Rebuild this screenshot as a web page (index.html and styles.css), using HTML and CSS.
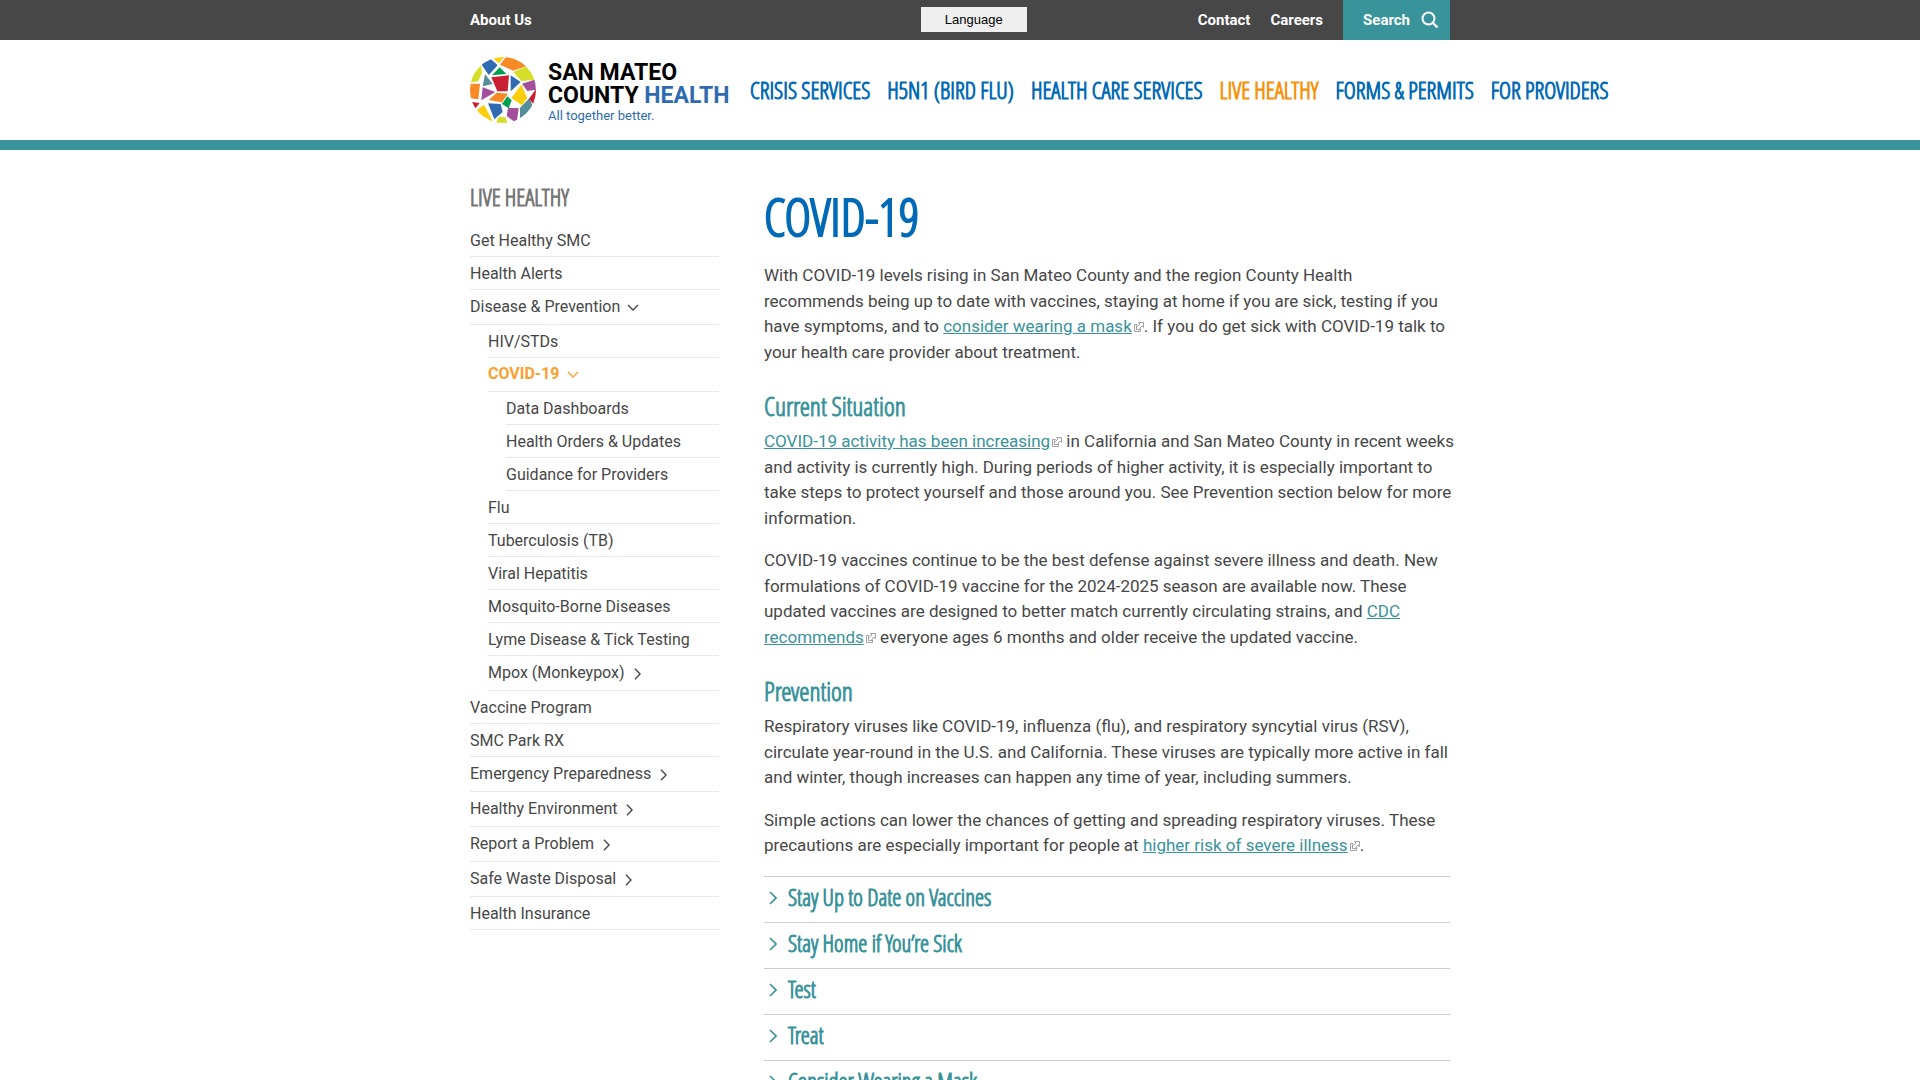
FILE: index.html
```html
<!DOCTYPE html>
<html lang="en">
<head>
<meta charset="utf-8">
<meta name="viewport" content="width=device-width, initial-scale=1">
<title>COVID-19 - San Mateo County Health</title>
<link rel="stylesheet" href="styles.css">
</head>
<body>
<svg class="sprite" aria-hidden="true">
  <symbol id="right" viewBox="0 0 8 14"><path d="M1 1l6 6-6 6" fill="none" stroke="currentColor" stroke-width="1.6"/></symbol>
  <symbol id="down" viewBox="0 0 12 8"><path d="M1 1l5 5 5-5" fill="none" stroke="currentColor" stroke-width="1.4"/></symbol>
  <symbol id="ext" viewBox="0 0 10 10"><path d="M3.500 2.500h-3v7h6v-3M4.500.500h5v5L8 4 5.500 6.500 6.500 7.500H2.500v-4l1 1L6 2z" fill="none" stroke="#999" stroke-width=".9"/></symbol>
</svg>

<div class="topbar">
  <div class="wrap topbar-row">
    <div><a class="top-link" href="#">About Us</a></div>
    <button class="language" type="button">Language</button>
    <nav class="top-right" aria-label="Utility">
      <a class="top-link" href="#">Contact</a>
      <a class="top-link" href="#">Careers</a>
      <button class="search" type="button">Search
        <svg width="18" height="18" viewBox="0 0 18 18" aria-hidden="true"><circle cx="7.500" cy="7.500" r="6" fill="none" stroke="#fff" stroke-width="2"/><path d="M12 12l4.500 4.500" stroke="#fff" stroke-width="2.400"/></svg>
      </button>
    </nav>
  </div>
</div>

<header class="header">
  <div class="wrap header-row">
    <a class="logo" href="#">
      <svg class="mosaic" viewBox="12 11 198 198" aria-hidden="true">
        <clipPath id="round"><circle cx="111" cy="110" r="99"/></clipPath>
        <g clip-path="url(#round)">
          <path fill="#fccf0d" d="M76 10h40L98 30zM166 94l18 40-16 22-32-22zM54 154l26 50-20 8-32-38z"/>
          <path fill="#2f6bb1" d="M46 33l26-18 23 21-27 29zM134 66l30 20-30 28zM66 150l38 2 6 24-25 22z"/>
          <path fill="#f78a24" d="M122 8h40l20 30-40 14-40-18zM6 91h36l-5 47-29-4zM92 118l34 3-18 26-40-7z"/>
          <path fill="#d5de29" d="M142 56l42-18 30 41-48 4zM8 88l14-30 23-24 3 26-12 24zM98 191h20l8 22H88z"/>
          <path fill="#558e98" d="M57 62l23 30-30 7zM162 164l29-31 12 34-41 34z"/>
          <path fill="#009f50" d="M78 66l23-24 20 20zM124 129l13 12-9 24-20-13z"/>
          <path fill="#c82032" d="M76 72l53-6-4 48H94zM212 104v60l-23-28zM10 145l31 4-17 21z"/>
          <path fill="#a44f9b" d="M168 91l44-14v32l-28 4zM50 102l38 14-42 25zM126 164l32 0-6 46-30-22z"/>
        </g>
      </svg>
      <span class="logo-words">
        <span class="logo-name">SAN MATEO<br>COUNTY <span class="logo-health">HEALTH</span></span>
        <span class="logo-tag">All together better.</span>
      </span>
    </a>
    <nav class="main-nav" aria-label="Main">
      <a href="#">CRISIS SERVICES</a>
      <a href="#">H5N1 (BIRD FLU)</a>
      <a href="#">HEALTH CARE SERVICES</a>
      <a class="current" href="#">LIVE HEALTHY</a>
      <a href="#">FORMS &amp; PERMITS</a>
      <a href="#">FOR PROVIDERS</a>
    </nav>
  </div>
</header>

<div class="wrap page">
  <nav class="sidebar" aria-label="Live Healthy">
    <h2 class="side-title">LIVE HEALTHY</h2>
    <ul>
      <li><a href="#">Get Healthy SMC</a></li>
      <li><a href="#">Health Alerts</a></li>
      <li><a class="more" href="#">Disease &amp; Prevention <svg class="down"><use href="#down"/></svg></a>
        <ul>
          <li><a href="#">HIV/STDs</a></li>
          <li><a class="more active" href="#">COVID-19 <svg class="down"><use href="#down"/></svg></a>
            <ul>
              <li><a href="#">Data Dashboards</a></li>
              <li><a href="#">Health Orders &amp; Updates</a></li>
              <li><a href="#">Guidance for Providers</a></li>
            </ul>
          </li>
          <li><a href="#">Flu</a></li>
          <li><a href="#">Tuberculosis (TB)</a></li>
          <li><a href="#">Viral Hepatitis</a></li>
          <li><a href="#">Mosquito-Borne Diseases</a></li>
          <li><a href="#">Lyme Disease &amp; Tick Testing</a></li>
          <li><a class="more" href="#">Mpox (Monkeypox) <svg class="right"><use href="#right"/></svg></a></li>
        </ul>
      </li>
      <li><a href="#">Vaccine Program</a></li>
      <li><a href="#">SMC Park RX</a></li>
      <li><a class="more" href="#">Emergency Preparedness <svg class="right"><use href="#right"/></svg></a></li>
      <li><a class="more" href="#">Healthy Environment <svg class="right"><use href="#right"/></svg></a></li>
      <li><a class="more" href="#">Report a Problem <svg class="right"><use href="#right"/></svg></a></li>
      <li><a class="more" href="#">Safe Waste Disposal <svg class="right"><use href="#right"/></svg></a></li>
      <li><a href="#">Health Insurance</a></li>
    </ul>
  </nav>

  <main class="content">
    <h1>COVID-19</h1>
    <p>With COVID-19 levels rising in San Mateo County and the region County Health recommends being up to date with vaccines, staying at home if you are sick, testing if you have symptoms, and to <a href="#">consider wearing a mask</a><svg class="ext"><use href="#ext"/></svg>. If you do get sick with COVID-19 talk to your health care provider about treatment.</p>
    <h2>Current Situation</h2>
    <p><a href="#">COVID-19 activity has been increasing</a><svg class="ext"><use href="#ext"/></svg> in California and San Mateo County in recent weeks and activity is currently high. During periods of higher activity, it is especially important to take steps to protect yourself and those around you. See Prevention section below for more information.</p>
    <p>COVID-19 vaccines continue to be the best defense against severe illness and death. New formulations of COVID-19 vaccine for the 2024-2025 season are available now. These updated vaccines are designed to better match currently circulating strains, and <a href="#">CDC recommends</a><svg class="ext"><use href="#ext"/></svg> everyone ages 6 months and older receive the updated vaccine.</p>
    <h2>Prevention</h2>
    <p>Respiratory viruses like COVID-19, influenza (flu), and respiratory syncytial virus (RSV), circulate year-round in the U.S. and California. These viruses are typically more active in fall and winter, though increases can happen any time of year, including summers.</p>
    <p>Simple actions can lower the chances of getting and spreading respiratory viruses. These precautions are especially important for people at <a href="#">higher risk of severe illness</a><svg class="ext"><use href="#ext"/></svg>.</p>
    <div class="accordion">
      <button type="button"><svg><use href="#right"/></svg>Stay Up to Date on Vaccines</button>
      <button type="button"><svg><use href="#right"/></svg>Stay Home if You’re Sick</button>
      <button type="button"><svg><use href="#right"/></svg>Test</button>
      <button type="button"><svg><use href="#right"/></svg>Treat</button>
      <button type="button"><svg><use href="#right"/></svg>Consider Wearing a Mask</button>
    </div>
  </main>
</div>
</body>
</html>
```
FILE: styles.css
```css
* { box-sizing: border-box; }

:root { --condensed: "Open Sans Condensed Light", "Roboto Condensed", sans-serif; }

body {
  margin: 0;
  background: #fff;
  color: #474747;
  font: 17px/1.5 Roboto, "Liberation Sans", sans-serif;
}

a { color: inherit; text-decoration: none; }
ul { list-style: none; margin: 0; padding: 0; }
h1, h2, p { margin: 0; }
button { border: 0; padding: 0; font: inherit; cursor: pointer; }
.sprite { display: none; }

.wrap { max-width: 980px; margin: 0 auto; }

/* Top bar */
.topbar { background: #474747; color: #fff; }
.topbar-row {
  display: grid;
  grid-template-columns: 46% auto 1fr;
  align-items: center;
  min-height: 40px;
}
.top-link, .search { font-size: 15px; font-weight: 700; }
.language {
  margin-bottom: 2px;
  padding: 5px 24px;
  background: #efefef;
  color: #000;
  font: 13px/15px "Liberation Sans", Arial, sans-serif;
}
.top-right {
  display: flex;
  justify-content: flex-end;
  align-items: center;
  gap: 20px;
}
.search {
  display: flex;
  align-items: center;
  gap: 11px;
  height: 40px;
  padding: 0 11px 0 20px;
  background: #39939b;
  color: #fff;
}

/* Header */
.header { border-bottom: 10px solid #39939b; }
.header-row { display: flex; align-items: center; min-height: 100px; }
.logo { display: flex; flex: none; width: 280px; gap: 12px; align-items: center; }
.mosaic { flex: none; width: 66px; height: 66px; }
.logo-words { padding-top: 6px; white-space: nowrap; }
.logo-name {
  display: block;
  color: #000;
  font: 700 23px/23px Roboto, sans-serif;
}
.logo-health { color: #2f6bb1; }
.logo-tag {
  display: block;
  color: #2f6bb1;
  font: 13px/18px Roboto, sans-serif;
}
.main-nav {
  display: flex;
  gap: 17px;
  white-space: nowrap;
  color: #006ab6;
  font: 23px/32px var(--condensed);
  -webkit-text-stroke: 1px;
}
.main-nav .current { color: #f7920b; }

/* Page columns */
.page {
  display: grid;
  grid-template-columns: 249px 1fr;
  gap: 45px;
  align-items: start;
}

/* Sidebar */
.sidebar { padding-top: 32px; font-size: 16px; line-height: 22px; }
.side-title {
  margin-bottom: 12px;
  color: #777;
  font: 23px/30px var(--condensed);
  -webkit-text-stroke: 1px;
}
.sidebar ul ul { margin-left: 18px; }
.sidebar li > a {
  display: block;
  padding: 6px 0 4px;
  border-bottom: 1px solid #e9e9e9;
}
.sidebar li > .more { display: flex; align-items: center; padding-bottom: 6px; }
.sidebar li > .active { padding: 5px 0 6px; color: #fba02f; font-weight: 700; }
.right { width: 7px; height: 12px; margin: 2px 0 0 9px; }
.down { width: 12px; height: 8px; margin: 2px 0 0 7px; }

/* Content */
.content h1 {
  margin: 34px 0 14px;
  color: #006ab6;
  font: 51px/65px var(--condensed);
  -webkit-text-stroke: 2px;
}
.content h2 {
  margin: 26px 0 8px;
  color: #39939b;
  font: 26px/30px var(--condensed);
  -webkit-text-stroke: 1px;
}
.content p { margin: 0 -5px 17px 0; }
.content p a { color: #39939b; text-decoration: underline; }
.ext { width: 10px; height: 10px; margin-left: 2px; }

.accordion button {
  display: flex;
  align-items: center;
  gap: 11px;
  width: 100%;
  min-height: 46px;
  padding: 0 0 4px 5px;
  border-top: 1px solid #ccc;
  background: none;
  color: #39939b;
  font: 23px/30px var(--condensed);
  -webkit-text-stroke: 1px;
}
.accordion svg { width: 8px; height: 14px; margin-top: 2px; }
```
